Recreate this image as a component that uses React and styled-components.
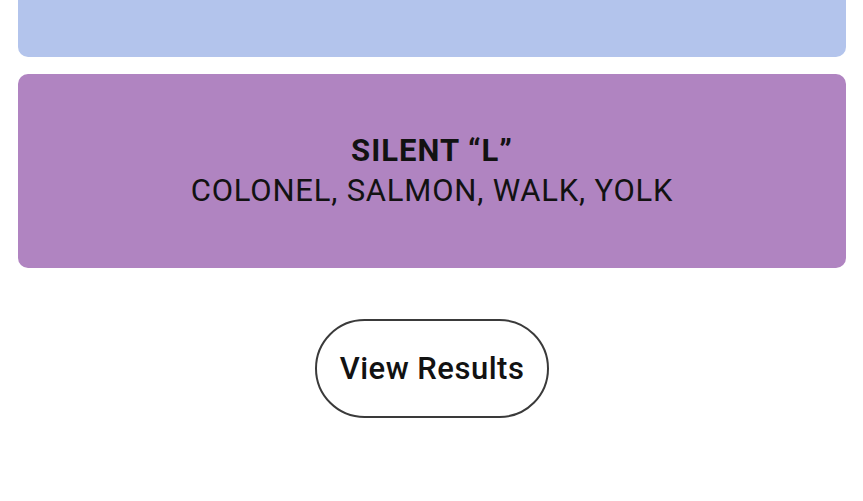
import React from "react";
import styled, { createGlobalStyle } from "styled-components";

const GlobalStyle = createGlobalStyle`
  html, body {
    margin: 0;
    padding: 0;
    background: #ffffff;
  }
  body {
    font-family: Roboto, "Liberation Sans", Arial, sans-serif;
    color: #121212;
    overflow: hidden;
  }
`;

const Page = styled.div`
  width: 863px;
  height: 501px;
  overflow: hidden;
  box-sizing: border-box;
  padding: 0 17px 0 18px;
`;

// the list is scrolled so that only the tail of the blue group shows
const GroupList = styled.div`
  display: flex;
  flex-direction: column;
  gap: 17px;
  margin-top: -137px;
`;

const Group = styled.div`
  height: 194px;
  border-radius: 10px;
  background: ${props => props.color};
  display: flex;
  flex-direction: column;
  align-items: center;
  justify-content: center;
  text-transform: uppercase;
  color: #121212;
`;

const Title = styled.div`
  font-size: 31px;
  font-weight: 700;
  line-height: 40px;
  letter-spacing: 1px;
`;

const Words = styled.div`
  font-size: 31px;
  font-weight: 400;
  line-height: 40px;
  letter-spacing: 0.8px;
`;

const Actions = styled.div`
  display: flex;
  justify-content: center;
  padding-top: 51px;
`;

const PillButton = styled.button`
  width: 234px;
  height: 99px;
  border: 2px solid #3a3a3a;
  border-radius: 50px;
  background: #fff;
  font-family: Roboto, "Liberation Sans", Arial, sans-serif;
  font-size: 31px;
  font-weight: 500;
  letter-spacing: 0.5px;
  color: #121212;
  cursor: pointer;
`;

const groups = [
  { color: "#b3c4ec", title: "", words: "" },
  { color: "#b084c1", title: "Silent “L”", words: "Colonel, Salmon, Walk, Yolk" },
];

export default function App() {
  return (
    <>
      <GlobalStyle />
      <Page>
        <GroupList>
          {groups.map((g, i) => (
            <Group key={i} color={g.color}>
              {g.title && <Title>{g.title}</Title>}
              {g.words && <Words>{g.words}</Words>}
            </Group>
          ))}
        </GroupList>
        <Actions>
          <PillButton>View Results</PillButton>
        </Actions>
      </Page>
    </>
  );
}
